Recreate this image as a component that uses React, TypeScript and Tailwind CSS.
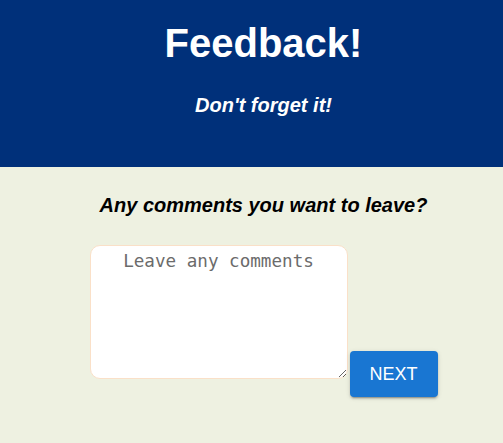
import { useState } from 'react'

export default function App() {
  const [comment, setComment] = useState('')

  return (
    <div className="min-h-screen bg-[#eef1e1] font-['Liberation_Sans',Arial,sans-serif]">
      <header className="bg-[#00307a] pl-6 pt-5 pb-[50px] text-center text-white">
        <h1 className="text-[40px] font-bold leading-[46px]">Feedback!</h1>
        <h3 className="mt-[28px] text-[20px] font-bold italic leading-[23px]">Don't forget it!</h3>
      </header>

      <main className="flex flex-col items-center pl-6 pt-[27px]">
        <h3 className="text-[20px] font-bold italic leading-[23px] text-black">
          Any comments you want to leave?
        </h3>
        <div className="mt-[28px] flex items-start gap-[2px]">
          <textarea
            value={comment}
            onChange={(e) => setComment(e.target.value)}
            placeholder="Leave any comments"
            className="h-[134px] w-[258px] rounded-[10px] border border-[#fae0c8] bg-white px-2 pt-[2px] text-center font-['DejaVu_Sans_Mono',monospace] text-[17.6px] text-black outline-none placeholder:text-[#6b6b6b]"
          />
          <button className="mt-[106px] h-[46px] w-[88px] rounded-[4px] bg-[#1976d2] text-[18px] text-white shadow-[0_3px_1px_-2px_rgba(0,0,0,0.2),0_2px_2px_0_rgba(0,0,0,0.14),0_1px_5px_0_rgba(0,0,0,0.12)]">
            NEXT
          </button>
        </div>
      </main>
    </div>
  )
}
